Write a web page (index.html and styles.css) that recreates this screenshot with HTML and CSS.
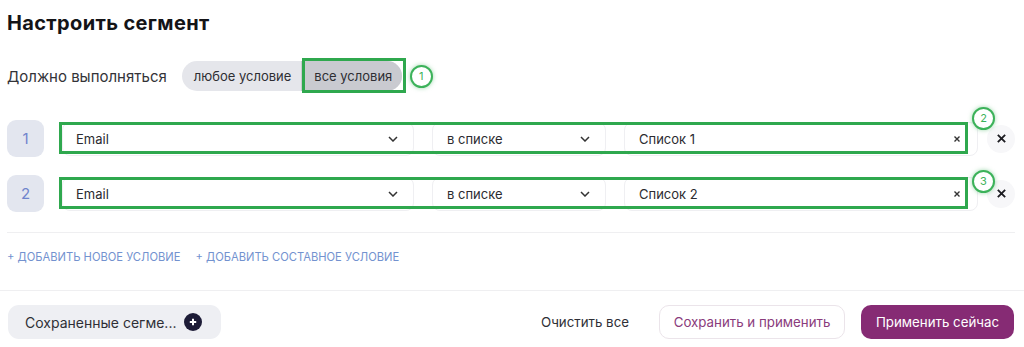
FILE: index.html
```html
<!DOCTYPE html>
<html lang="ru">
<head>
<meta charset="utf-8">
<title>Настроить сегмент</title>
<link rel="stylesheet" href="styles.css">
</head>
<body>
<div class="page">
  <h1 class="title">Настроить сегмент</h1>

  <div class="match">
    <span class="match-label">Должно выполняться</span>
    <div class="seg">
      <span class="seg-item">любое условие</span>
      <span class="seg-item seg-active">все условия</span>
      <span class="mark mark-seg"></span>
      <span class="badge badge-1">1</span>
    </div>
  </div>

  <div class="conditions">
    <div class="cond">
      <div class="num">1</div>
      <div class="fields">
        <div class="field f-attr"><span>Email</span><svg class="chev" viewBox="0 0 10 6"><path d="M1 1l4 4 4-4"/></svg></div>
        <div class="field f-op"><span>в списке</span><svg class="chev" viewBox="0 0 10 6"><path d="M1 1l4 4 4-4"/></svg></div>
        <div class="field f-val"><span>Список 1</span><svg class="clr" viewBox="0 0 8 8"><path d="M1.5 1.5l5 5M6.5 1.5l-5 5"/></svg></div>
        <span class="mark mark-row"></span>
        <span class="badge badge-row">2</span>
      </div>
      <button class="del"><svg viewBox="0 0 12 12"><path d="M2 2l8 8M10 2l-8 8"/></svg></button>
    </div>
    <div class="cond">
      <div class="num">2</div>
      <div class="fields">
        <div class="field f-attr"><span>Email</span><svg class="chev" viewBox="0 0 10 6"><path d="M1 1l4 4 4-4"/></svg></div>
        <div class="field f-op"><span>в списке</span><svg class="chev" viewBox="0 0 10 6"><path d="M1 1l4 4 4-4"/></svg></div>
        <div class="field f-val"><span>Список 2</span><svg class="clr" viewBox="0 0 8 8"><path d="M1.5 1.5l5 5M6.5 1.5l-5 5"/></svg></div>
        <span class="mark mark-row"></span>
        <span class="badge badge-row badge-low">3</span>
      </div>
      <button class="del"><svg viewBox="0 0 12 12"><path d="M2 2l8 8M10 2l-8 8"/></svg></button>
    </div>
  </div>

  <div class="divider"></div>

  <div class="links">
    <a class="add">+ Добавить новое условие</a>
    <a class="add">+ Добавить составное условие</a>
  </div>
</div>

<div class="divider-full"></div>

<div class="footer">
  <button class="saved">Сохраненные сегме...<span class="plus"><svg viewBox="0 0 10 10"><path d="M5 1.8v6.4M1.8 5h6.4"/></svg></span></button>
  <div class="actions">
    <button class="btn-text">Очистить все</button>
    <button class="btn-outline">Сохранить и применить</button>
    <button class="btn-primary">Применить сейчас</button>
  </div>
</div>
</body>
</html>
```

FILE: styles.css
```css
* { box-sizing: border-box; }
html, body { margin: 0; padding: 0; background: #fff; }
body {
  font-family: Inter, "Liberation Sans", sans-serif;
  color: #2b2b30;
  width: 1024px;
  height: 347px;
  overflow: hidden;
}
button { font-family: inherit; border: 0; background: none; padding: 0; cursor: pointer; }

.page { padding: 0 9px 0 7px; }

.title {
  margin: 0;
  padding-top: 11px;
  font-size: 20px;
  line-height: 24px;
  font-weight: 700;
  color: #141417;
  letter-spacing: 0.35px;
}

.match {
  margin-top: 26px;
  height: 30px;
  display: flex;
  align-items: center;
  gap: 15px;
}
.match-label { font-size: 15px; color: #333338; }
.seg {
  position: relative;
  display: flex;
  height: 30px;
  background: #e5e6eb;
  border-radius: 15px;
}
.seg-item {
  display: flex;
  align-items: center;
  padding: 0 10px 0 12px;
  font-size: 13px;
  color: #2e2e33;
}
.seg-active {
  background: #c9cad0;
  padding: 0 10px 0 13px;
  border-radius: 0 15px 15px 0;
}

.mark {
  position: absolute;
  border: 3px solid #2fa84e;
  pointer-events: none;
}
.mark-seg { left: 120px; top: -3px; width: 104px; height: 35px; }
.badge {
  position: absolute;
  width: 23px;
  height: 23px;
  border-radius: 50%;
  border: 2px solid #3cb25a;
  background: #fff;
  box-shadow: 0 0 4px rgba(60, 178, 90, 0.5);
  color: #3cb25a;
  font-size: 11px;
  line-height: 19px;
  text-align: center;
}
.badge-1 { left: 228px; top: 4px; }

.conditions {
  margin-top: 29px;
  display: flex;
  flex-direction: column;
  gap: 18px;
}
.cond {
  height: 37px;
  display: flex;
  align-items: center;
}
.num {
  width: 37px;
  height: 37px;
  border-radius: 9px;
  background: #e3e6ef;
  color: #6f84cc;
  font-size: 15px;
  display: flex;
  align-items: center;
  justify-content: center;
  margin-right: 18px;
}
.fields {
  position: relative;
  display: flex;
  gap: 18px;
}
.field {
  height: 34px;
  border: 1px solid #efeff2;
  border-radius: 8px;
  background: #fff;
  display: flex;
  align-items: center;
  justify-content: space-between;
  padding: 0 15px 0 13px;
  font-size: 13px;
  color: #2b2b30;
}
.f-attr { width: 352px; }
.f-op { width: 174px; }
.f-val { width: 354px; padding-right: 16px; }
.f-op span, .f-val span { padding-left: 1px; }
.chev { width: 10px; height: 6px; fill: none; stroke: #333; stroke-width: 1.5; }
.clr { width: 8px; height: 8px; fill: none; stroke: #333; stroke-width: 1.4; }
.mark-row { left: -3px; top: 0px; width: 909px; height: 32px; }
.badge-row { left: 910px; top: -15px; }
.badge-low { top: -7px; }

.del {
  margin-left: 9px;
  width: 28px;
  height: 28px;
  border-radius: 50%;
  background: #f7f7f9;
  display: flex;
  align-items: center;
  justify-content: center;
}
.del svg { width: 11px; height: 11px; fill: none; stroke: #1d1d22; stroke-width: 2; }

.divider {
  margin-top: 20px;
  height: 1px;
  background: #efeff1;
}
.links {
  margin-top: 16px;
  height: 16px;
  display: flex;
  align-items: center;
  gap: 15px;
}
.add {
  font-size: 11.2px;
  text-transform: uppercase;
  color: #7392cf;
}

.divider-full {
  margin-top: 25px;
  height: 1px;
  background: #efeff1;
}

.footer {
  margin-top: 14px;
  height: 34px;
  padding: 0 10px 0 8px;
  display: flex;
  align-items: center;
  justify-content: space-between;
}
.saved {
  width: 213px;
  height: 34px;
  background: #eeeff3;
  border-radius: 11px;
  display: flex;
  align-items: center;
  padding: 0 19px 0 17px;
  font-size: 14px;
  color: #2f2f36;
  justify-content: space-between;
}
.plus {
  width: 18px;
  height: 18px;
  border-radius: 50%;
  background: #1d1c37;
  display: flex;
  align-items: center;
  justify-content: center;
}
.plus svg { width: 10px; height: 10px; fill: none; stroke: #fff; stroke-width: 2; }

.actions { display: flex; align-items: center; }
.btn-text {
  font-size: 13.3px;
  color: #2f2f36;
  margin-right: 30px;
}
.btn-outline {
  width: 186px;
  height: 34px;
  border: 1px solid #ebe4ea;
  border-radius: 10px;
  font-size: 13.3px;
  color: #8a3b7c;
  background: #fff;
  margin-right: 16px;
}
.btn-primary {
  width: 153px;
  height: 34px;
  border-radius: 10px;
  background: #862b74;
  color: #fff;
  font-size: 13.3px;
}
```
